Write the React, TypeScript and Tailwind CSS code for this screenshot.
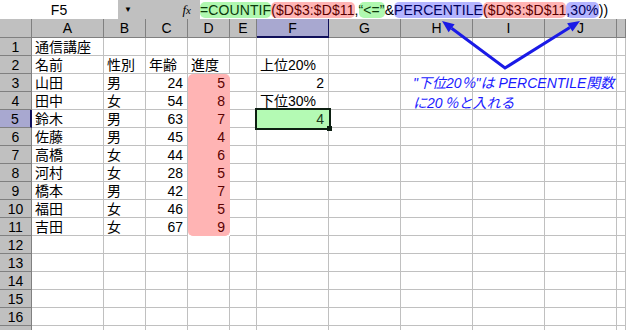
import React from "react";

type Cell = string | number;

const COLS = ["A", "B", "C", "D", "E", "F", "G", "H", "I", "J", ""];

const ROWS: Cell[][] = [
  ["通信講座"],
  ["名前", "性別", "年齢", "進度", "", "上位20%"],
  ["山田", "男", 24, 5, "", 2],
  ["田中", "女", 54, 8, "", "下位30%"],
  ["鈴木", "男", 63, 7, "", 4],
  ["佐藤", "男", 45, 4],
  ["高橋", "女", 44, 6],
  ["河村", "女", 28, 5],
  ["橋本", "男", 42, 7],
  ["福田", "女", 46, 5],
  ["吉田", "女", 67, 9],
];

const FONT = { fontFamily: '"Liberation Sans", "Noto Sans CJK JP", sans-serif' };

const Seg: React.FC<{ tone?: "g" | "r" | "b"; children: React.ReactNode }> = ({ tone, children }) => {
  if (!tone) return <span>{children}</span>;
  const cls =
    tone === "g"
      ? "bg-[#b0f8b0] text-[#0b3a0b]"
      : tone === "r"
      ? "bg-[#ffb4b4] text-[#5a0000]"
      : "bg-[#b4b4ff] text-[#00005a]";
  return <span className={`${cls} rounded-[5px] h-[16px] flex items-center`}>{children}</span>;
};

const FormulaBar: React.FC = () => (
  <div className="flex h-[19px] bg-[#c0c0c0] text-[14px] leading-none text-black" style={FONT}>
    <div className="w-[118px] bg-white flex items-center justify-center">F5</div>
    <div className="w-[82px] flex items-center">
      <span className="ml-[6px] text-[8px]">▼</span>
      <span className="ml-auto mr-[9px] italic text-[13px]" style={{ fontFamily: '"Liberation Serif", serif' }}>
        f<span className="text-[11px]">x</span>
      </span>
    </div>
    <div className="flex-1 bg-white flex items-center whitespace-pre tracking-[0.1px]">
      <Seg tone="g">=COUNTIF</Seg>
      <Seg tone="r">($D$3:$D$11</Seg>
      <Seg>,</Seg>
      <Seg tone="g">“&lt;=”</Seg>
      <Seg>&amp;</Seg>
      <Seg tone="b">PERCENTILE</Seg>
      <Seg tone="r">($D$3:$D$11</Seg>
      <Seg tone="b">,30%</Seg>
      <Seg>))</Seg>
    </div>
  </div>
);

const App: React.FC = () => {
  const rowCount = 17;
  return (
    <div className="relative w-[626px] h-[330px] overflow-hidden bg-white" style={FONT}>
      <FormulaBar />
      <div className="grid grid-cols-[32px_72px_42px_42px_42px_27px_72px_72px_72px_72px_72px_9px] text-[14px] leading-none text-black">
        {/* column header row */}
        <div className="h-[19px] bg-[#c0c0c0] border-r border-b border-[#808080]" />
        {COLS.map((c, i) => (
          <div
            key={c + i}
            className={
              c === "F"
                ? "h-[19px] bg-[#a8a8d0] border-r border-b-2 border-[#10105a] flex items-center justify-center"
                : "h-[19px] bg-[#c0c0c0] border-r border-b border-[#808080] flex items-center justify-center"
            }
          >
            {c}
          </div>
        ))}
        {Array.from({ length: rowCount }).map((_, r) => {
          const data = ROWS[r] || [];
          const rowNo = r + 1;
          return (
            <React.Fragment key={rowNo}>
              <div
                className={
                  rowNo === 5
                    ? "h-[18px] bg-[#a8a8d0] border-r-2 border-b border-r-[#10105a] border-b-[#808080] flex items-center justify-center"
                    : "h-[18px] bg-[#c0c0c0] border-r border-b border-[#808080] flex items-center justify-center"
                }
              >
                {rowNo < rowCount ? rowNo : null}
              </div>
              {COLS.map((c, ci) => {
                const v = data[ci];
                const isNum = typeof v === "number";
                const pink = c === "D" && rowNo >= 3 && rowNo <= 11;
                const sel = c === "F" && rowNo === 5;
                let cls = "h-[18px] border-r border-b flex items-center whitespace-nowrap ";
                if (pink) {
                  cls += "bg-[#ffb4b4] border-[#ffb4b4] text-[#5a0000] ";
                  if (rowNo === 3) cls += "rounded-t-[5px] ";
                  if (rowNo === 11) cls += "rounded-b-[5px] ";
                } else if (sel) {
                  cls += "relative z-10 bg-[#b4fab4] border-[#b4fab4] text-[#1d3a1d] outline-2 outline-[#0d1f12] ";
                } else {
                  cls += "border-[#c0c0c0] ";
                }
                cls += isNum ? "justify-end pr-[4px]" : "pl-[3px]";
                return (
                  <div key={c + ci} className={cls}>
                    {v !== undefined && v !== "" ? v : null}
                    {sel && <span className="absolute -right-[4px] -bottom-[4px] w-[5px] h-[5px] bg-[#0d1f12]" />}
                  </div>
                );
              })}
            </React.Fragment>
          );
        })}
      </div>

      {/* callout arrows */}
      <svg className="absolute left-0 top-0 pointer-events-none" width="626" height="330">
        <polyline points="451.6,28.2 505,68 569.8,27.4" stroke="#1a1ae6" strokeWidth="3" fill="none" />
        <polygon points="442,21 454.6,24.2 448.6,32.2" fill="#1a1ae6" />
        <polygon points="580,21 572.5,31.6 567.1,23.2" fill="#1a1ae6" />
      </svg>

      {/* text box */}
      <div className="absolute left-[413px] top-[73px] text-[14px] leading-[20px] italic text-[#1a1aff] whitespace-nowrap">
        <div>"下位20％"は PERCENTILE関数</div>
        <div>
          に20<span className="tracking-[-2px]"> </span>％と入れる
        </div>
      </div>
    </div>
  );
};

export default App;
